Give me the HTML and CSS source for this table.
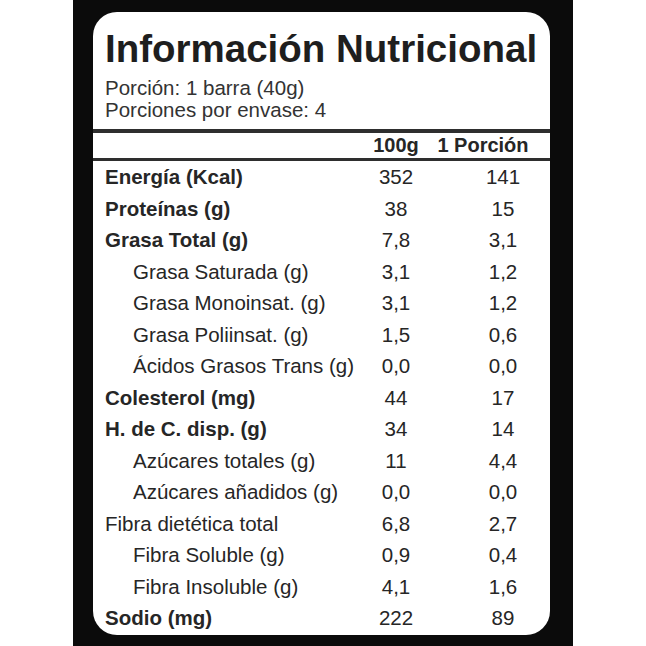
FILE: index.html
```html
<!DOCTYPE html>
<html lang="es">
<head>
<meta charset="utf-8">
<title>Información Nutricional</title>
<link rel="stylesheet" href="styles.css">
</head>
<body>
<div class="frame">
  <div class="card">
    <div class="head">
      <h1 class="title">Información Nutricional</h1>
      <p class="sub">Porción: 1 barra (40g)</p>
      <p class="sub">Porciones por envase: 4</p>
    </div>
    <div class="table">
      <div class="row header">
        <span class="label"></span>
        <span class="val">100g</span>
        <span class="val porcion">1 Porción</span>
      </div>
      <div class="rows">
        <div class="row bold"><span class="label">Energía (Kcal)</span><span class="val">352</span><span class="val">141</span></div>
        <div class="row bold"><span class="label">Proteínas (g)</span><span class="val">38</span><span class="val">15</span></div>
        <div class="row bold"><span class="label">Grasa Total (g)</span><span class="val">7,8</span><span class="val">3,1</span></div>
        <div class="row sub-row"><span class="label">Grasa Saturada (g)</span><span class="val">3,1</span><span class="val">1,2</span></div>
        <div class="row sub-row"><span class="label">Grasa Monoinsat. (g)</span><span class="val">3,1</span><span class="val">1,2</span></div>
        <div class="row sub-row"><span class="label">Grasa Poliinsat. (g)</span><span class="val">1,5</span><span class="val">0,6</span></div>
        <div class="row sub-row"><span class="label">Ácidos Grasos Trans (g)</span><span class="val">0,0</span><span class="val">0,0</span></div>
        <div class="row bold"><span class="label">Colesterol (mg)</span><span class="val">44</span><span class="val">17</span></div>
        <div class="row bold"><span class="label">H. de C. disp. (g)</span><span class="val">34</span><span class="val">14</span></div>
        <div class="row sub-row"><span class="label">Azúcares totales (g)</span><span class="val">11</span><span class="val">4,4</span></div>
        <div class="row sub-row"><span class="label">Azúcares añadidos (g)</span><span class="val">0,0</span><span class="val">0,0</span></div>
        <div class="row"><span class="label">Fibra dietética total</span><span class="val">6,8</span><span class="val">2,7</span></div>
        <div class="row sub-row"><span class="label">Fibra Soluble (g)</span><span class="val">0,9</span><span class="val">0,4</span></div>
        <div class="row sub-row"><span class="label">Fibra Insoluble (g)</span><span class="val">4,1</span><span class="val">1,6</span></div>
        <div class="row bold"><span class="label">Sodio (mg)</span><span class="val">222</span><span class="val">89</span></div>
      </div>
    </div>
  </div>
</div>
</body>
</html>
```

FILE: styles.css
```css
* { box-sizing: border-box; }
html, body {
  margin: 0;
  padding: 0;
  background: #ffffff;
}
body {
  width: 646px;
  height: 646px;
  overflow: hidden;
  font-family: "Liberation Sans", Arial, sans-serif;
  color: #262626;
}
.frame {
  margin-left: 73px;
  width: 500px;
  height: 646px;
  background: #0b0b0b;
  padding: 12px 23px 11px 20px;
}
.card {
  background: #ffffff;
  border-radius: 24px;
  height: 623px;
  overflow: hidden;
  display: flex;
  flex-direction: column;
}
.head {
  padding: 16.5px 12px 8.5px 12px;
  border-bottom: 4px solid #2e2e2e;
}
.title {
  margin: 0 0 8px 0;
  font-size: 38.5px;
  line-height: 40px;
  font-weight: bold;
  color: #1e1e1e;
}
.sub {
  margin: 0;
  font-size: 20.5px;
  line-height: 22px;
  color: #333333;
}
.row {
  display: grid;
  grid-template-columns: minmax(0, 1fr) 80px 94px;
  column-gap: 20px;
  padding-left: 12px;
  height: 31.5px;
  align-items: baseline;
  font-size: 20.5px;
  line-height: 31.5px;
  white-space: nowrap;
}
.row.header {
  line-height: 25px;
  font-size: 20px;
  font-weight: bold;
  border-bottom: 3px solid #2e2e2e;
  height: 28px;
}
.val {
  text-align: center;
}
.porcion {
  margin-left: -40px;
}
.bold .label {
  font-weight: bold;
}
.sub-row .label {
  padding-left: 28px;
}
```
